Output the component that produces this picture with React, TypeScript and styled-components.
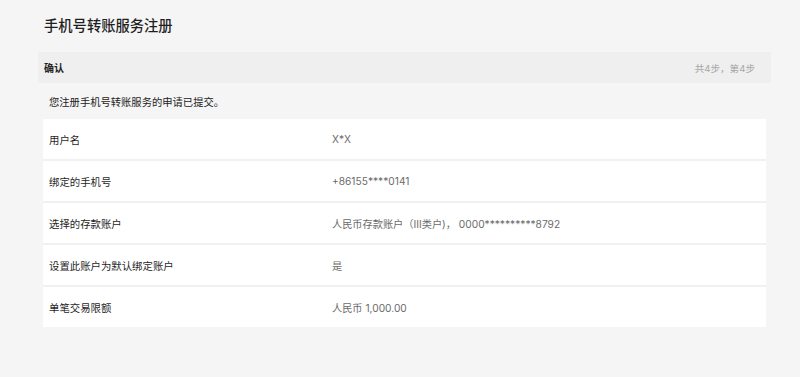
import React from "react";
import styled, { createGlobalStyle } from "styled-components";

const Global = createGlobalStyle`
  html, body { margin: 0; padding: 0; background: #f5f5f5; }
  body { font-family: Inter, "Noto Sans CJK SC", sans-serif; }
`;

const Page = styled.div`
  width: 733px;
  margin-left: 38px;
  padding-top: 16px;
`;

const Title = styled.h1`
  margin: 0 0 16px 6px;
  font-size: 14.3px;
  line-height: 20px;
  font-weight: 500;
  color: #1f1f1f;
`;

const StepBar = styled.div`
  height: 31px;
  background: #efefef;
  display: flex;
  align-items: center;
  justify-content: space-between;
  padding: 0 16px 0 6px;
`;

const StepName = styled.span`
  font-size: 10px;
  font-weight: 700;
  color: #222;
`;

const StepCount = styled.span`
  font-size: 9.6px;
  color: #a8a8a8;
`;

const Message = styled.div`
  height: 36px;
  display: flex;
  align-items: center;
  padding-left: 11px;
  font-size: 10.3px;
  color: #222;
`;

const Table = styled.div`
  margin: 0 5px;
  display: flex;
  flex-direction: column;
`;

const Row = styled.div`
  height: 40px;
  display: grid;
  grid-template-columns: 283px 1fr;
  align-items: center;
  padding: 0 6px;
  background: #fff;
  & + & {
    border-top: 2px solid #f1f1f1;
  }
`;

const Label = styled.span`
  font-size: 10.4px;
  color: #1f1f1f;
`;

const Value = styled.span`
  font-size: 10.2px;
  color: #6b6b6b;
`;

const rows: [string, string][] = [
  ["用户名", "X*X"],
  ["绑定的手机号", "+86155****0141"],
  ["选择的存款账户", "人民币存款账户（III类户)， 0000**********8792"],
  ["设置此账户为默认绑定账户", "是"],
  ["单笔交易限额", "人民币 1,000.00"],
];

export default function App() {
  return (
    <>
      <Global />
      <Page>
        <Title>手机号转账服务注册</Title>
        <StepBar>
          <StepName>确认</StepName>
          <StepCount>共4步，第4步</StepCount>
        </StepBar>
        <Message>您注册手机号转账服务的申请已提交。</Message>
        <Table>
          {rows.map(([k, v]) => (
            <Row key={k}>
              <Label>{k}</Label>
              <Value>{v}</Value>
            </Row>
          ))}
        </Table>
      </Page>
    </>
  );
}
